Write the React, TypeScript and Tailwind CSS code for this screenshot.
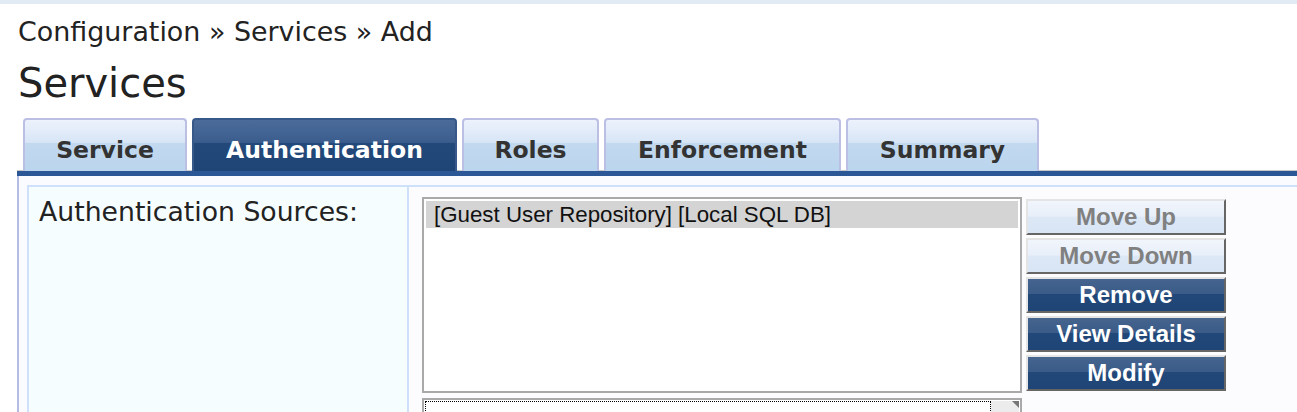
import React from 'react';

type Tab = { label: string; width: string; active?: boolean };

const tabs: Tab[] = [
  { label: 'Service', width: 'w-[164px]' },
  { label: 'Authentication', width: 'w-[265px]', active: true },
  { label: 'Roles', width: 'w-[137px]' },
  { label: 'Enforcement', width: 'w-[237px]' },
  { label: 'Summary', width: 'w-[193px]' },
];

const actions = [
  { label: 'Move Up', disabled: true },
  { label: 'Move Down', disabled: true },
  { label: 'Remove' },
  { label: 'View Details' },
  { label: 'Modify' },
];

const verdana = "font-['DejaVu_Sans',Verdana,sans-serif]";
const helvetica = "font-['Liberation_Sans',Helvetica,Arial,sans-serif]";

const App: React.FC = () => {
  return (
    <div className="h-[412px] w-full overflow-hidden bg-white">
      <div className="h-[4px] bg-[#e2eaf6]" />

      <div className={`pl-[18px] text-[#222] ${verdana}`}>
        <div className="pt-[10px] text-[26.9px] leading-[36px]">Configuration » Services » Add</div>
        <h1 className="mt-[7px] text-[40px] leading-[52px]">Services</h1>
      </div>

      {/* tab strip */}
      <div className="mt-[9px] ml-[17px] flex gap-[5px] border-b border-[#c8c8c8] pl-[6px]">
        {tabs.map((t) => (
          <div
            key={t.label}
            className={`-mb-px flex h-[53px] items-center justify-center rounded-t-[4px] border-2 border-b-0 pt-[11px] text-[23.5px] font-bold ${verdana} ${t.width} ${
              t.active
                ? 'border-[#36598a] bg-[linear-gradient(#4b6c9b,#3b5d8d_44%,#224979_45%,#1f4577)] text-white'
                : 'border-[#bbbfe4] bg-[linear-gradient(#edf2fc,#d7e5f6_44%,#c2d9ef_45%,#bbd5ee)] text-[#333]'
            }`}
          >
            {t.label}
          </div>
        ))}
      </div>
      <div className="ml-[17px] h-[5px] bg-[#2b5796]" />

      {/* content panel */}
      <div className="ml-[17px] flex h-[300px] border-l-2 border-[#b3bce3] bg-[#fafbfe] pt-[9px] pl-[8px]">
        <div className="w-[382px] shrink-0 border-2 border-[#cfe0fb] bg-[#f6fdfe] pl-[10px] pt-[9px]">
          <span className={`text-[26.7px] leading-[32px] text-[#222] ${verdana}`}>Authentication Sources:</span>
        </div>

        <div className="flex-1 border-t-2 border-[#cfe0fb] bg-[#fcfcfe] pl-[13px] pt-[10px]">
          <div className="flex">
            <div>
              <div className="h-[196px] w-[600px] border-2 border-[#a9a9a9] bg-white p-[2px]">
                <div className={`h-[27px] bg-[#d4d4d4] pl-[8px] text-[22.3px] leading-[27px] text-[#111] ${helvetica}`}>
                  [Guest User Repository] [Local SQL DB]
                </div>
              </div>
              <div className="mt-[5px] flex h-[40px] w-[600px] border-2 border-[#a9a9a9] bg-white p-[1px]">
                <div className={`flex-1 border border-dotted border-black pl-[20px] pt-[6px] text-[22.3px] leading-[27px] text-[#111] ${helvetica}`}>
                  -- Select to Add --
                </div>
                <div className="relative w-[28px] bg-[#ececec]">
                  <div className="absolute right-0 top-0 h-0 w-0 border-l-[7px] border-t-[7px] border-l-transparent border-t-[#777]" />
                </div>
              </div>
            </div>

            <div className="ml-[4px] mt-[2px] flex w-[200px] flex-col gap-[3px]">
              {actions.map((a) => (
                <div
                  key={a.label}
                  className={`flex h-[36px] items-center justify-center border-2 border-t-[#e4e4e4] border-l-[#e4e4e4] border-r-[#666] border-b-[#666] text-[24px] font-bold ${helvetica} ${
                    a.disabled
                      ? 'bg-[linear-gradient(#f1f5fc,#e8eff9_48%,#dde8f6_49%,#d8e5f5)] text-[#808080]'
                      : 'bg-[linear-gradient(#45658f,#3b5b88_46%,#214879_47%,#1f4577)] text-white'
                  }`}
                >
                  {a.label}
                </div>
              ))}
            </div>
          </div>
        </div>
      </div>
    </div>
  );
};

export default App;
